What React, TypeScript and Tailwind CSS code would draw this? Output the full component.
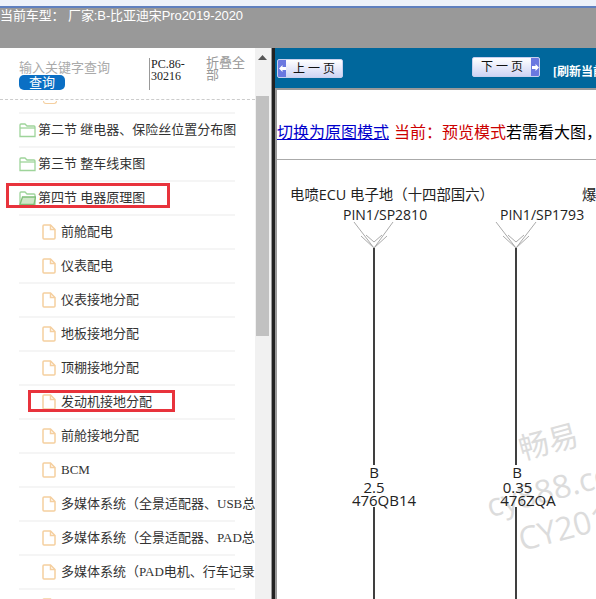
const serif = "font-['Liberation_Serif','Noto_Sans_CJK_SC',serif]";

const rows = [
  { label: "第二节 继电器、保险丝位置分布图", folder: true },
  { label: "第三节 整车线束图", folder: true },
  { label: "第四节 电器原理图", folder: true, open: true },
  { label: "前舱配电" },
  { label: "仪表配电" },
  { label: "仪表接地分配" },
  { label: "地板接地分配" },
  { label: "顶棚接地分配" },
  { label: "发动机接地分配" },
  { label: "前舱接地分配" },
  { label: "BCM" },
  { label: "多媒体系统（全景适配器、USB总" },
  { label: "多媒体系统（全景适配器、PAD总" },
  { label: "多媒体系统（PAD电机、行车记录" },
  { label: "" },
];

function FolderIcon({ open }: { open?: boolean }) {
  return (
    <svg width="17" height="15" viewBox="0 0 17 15" fill="none" stroke="#9ed49a" strokeWidth="1.3" className="shrink-0">
      <path d="M1 13.5V2a1 1 0 0 1 1-1h4l2 2h7a1 1 0 0 1 1 1v9.5z" />
      {open && <path d="M1 13.5 3.5 6H16.5L15 13.5z" fill="#cfe8c8" stroke="#7fbf78" />}
      {!open && <path d="M1 5h15" />}
    </svg>
  );
}

function FileIcon() {
  return (
    <svg width="14" height="16" viewBox="0 0 14 16" fill="none" stroke="#f5cf9f" strokeWidth="1.5" className="shrink-0">
      <path d="M2 1h6.5L13 5.5V14a1 1 0 0 1-1 1H2a1 1 0 0 1-1-1V2a1 1 0 0 1 1-1z" />
      <path d="M8.5 1v4.5H13" />
    </svg>
  );
}

function PageButton({ label, dir }: { label: string; dir: "prev" | "next" }) {
  const arrow = (
    <span className="flex h-full w-[8px] shrink-0 items-center justify-center bg-[#6a78e0]">
      <svg width="7" height="7" viewBox="0 0 7 7" fill="#fff">
        <path d={dir === "prev" ? "M0 3.5 3.5 0V2H7V5H3.5V7z" : "M7 3.5 3.5 0V2H0V5H3.5V7z"} />
      </svg>
    </span>
  );
  return (
    <div
      className={`flex items-center overflow-hidden rounded-[2px] border border-[#c8d0ee] bg-gradient-to-b from-[#ffffff] to-[#cfd4f4] text-[12px] text-[#111] ${
        dir === "prev" ? "h-[19px] w-[66px]" : "h-[20px] w-[68px]"
      }`}
    >
      {dir === "prev" && arrow}
      <span className="flex-1 whitespace-pre text-center">{label}</span>
      {dir === "next" && arrow}
    </div>
  );
}

function Diagram() {
  const font = "'Open Sans','Noto Sans CJK SC',sans-serif";
  return (
    <svg width="319" height="439" viewBox="277 160 319 439" className="block" fontFamily={font} fill="#222">
      <g fill="#dcdcdc" transform="rotate(-15 560 450)">
        <text x="521" y="450" fontSize="30">畅易</text>
        <text x="475" y="497" fontSize="32">cy888.com</text>
        <text x="497" y="538" fontSize="32">CY2018</text>
      </g>

      <text x="290" y="200" fontSize="14.4">电喷ECU 电子地（十四部国六）</text>
      <text x="582" y="200" fontSize="14.4">爆</text>
      <text x="343" y="220" fontSize="14">PIN1/SP2810</text>
      <text x="500" y="220" fontSize="14">PIN1/SP1793</text>

      <g fill="none" stroke="#aaa" strokeWidth="1">
        <path d="M354 222 374 248 393 222M361 236 374 248 387 236M366 235 374 242 382 235" />
        <path d="M496 222 516 248 536 222M503 236 516 248 529 236M508 235 516 242 524 235" />
      </g>
      <g stroke="#111" strokeWidth="1.6">
        <path d="M374 248V465M374 507V599" />
        <path d="M516 248V465M516 507V599" />
      </g>

      <g fontSize="15" textAnchor="middle">
        <text x="374" y="478">B</text>
        <text x="374" y="493">2.5</text>
        <text x="384" y="506">476QB14</text>
        <text x="517" y="478">B</text>
        <text x="517.5" y="493">0.35</text>
        <text x="528" y="506">476ZQA</text>
      </g>
    </svg>
  );
}

export default function App() {
  return (
    <div className={`flex h-[599px] w-[596px] flex-col overflow-hidden bg-white ${serif}`}>
      {/* window edge */}
      <div className="h-[8px] shrink-0 border-b-2 border-[#5f80bf] bg-[#edf2fa]" />

      {/* current model */}
      <div className="h-[40px] shrink-0 bg-[#999999] font-['Liberation_Sans','Noto_Sans_CJK_SC',sans-serif] text-[13px] leading-[16px] tracking-[-0.1px] text-white">
        当前车型： 厂家:B-比亚迪宋Pro2019-2020
      </div>

      <div className="flex min-h-0 flex-1">
        {/* left tree */}
        <div className="relative w-[255px] shrink-0 overflow-hidden">
          <div className="flex h-[52px] border-b border-dashed border-[#ccc]">
            <div className="ml-[19px] w-[130px] pt-[13px]">
              <div className="text-[13px] leading-[14px] text-[#aaa]">输入关键字查询</div>
              <div className="h-[15px] w-[46px] rounded-[5px] bg-[#0a6fc4] text-center text-[13px] leading-[15px] text-white">
                查询
              </div>
            </div>
            <div className="mt-[10px] h-[32px] w-[57px] border-l border-[#999] pl-[1px] text-[12px] leading-[12px] text-[#222]">
              PC.86-
              <br />
              30216
            </div>
            <div className="mt-[9px] w-[39px] text-[13px] leading-[12px] text-[#999]">折叠全部</div>
          </div>

          {/* row that is scrolled away, only its icon's foot shows */}
          <div className="ml-[19px] flex h-[14px] w-[216px] items-end border-b-2 border-[#f5f5f5] pb-[8px] pl-[24px]">
            <div className="h-[3px] w-[14px] rounded-b-[4px] border-x border-b border-[#f5cf9f]" />
          </div>

          <ul className="ml-[19px] w-[216px]">
            {rows.map((r, i) => (
              <li
                key={i}
                className={`flex h-[34px] items-center whitespace-nowrap border-b-2 border-[#f5f5f5] text-[13px] text-[#333] ${
                  r.folder ? "gap-[2px]" : "gap-[5px] pl-[23px]"
                }`}
              >
                {r.folder ? <FolderIcon open={r.open} /> : <FileIcon />}
                {r.label && <span>{r.label}</span>}
              </li>
            ))}
          </ul>

          {/* annotation boxes */}
          <div className="absolute left-[6px] top-[135px] h-[25px] w-[164px] border-[3px] border-[#e8333c]" />
          <div className="absolute left-[28px] top-[342px] h-[22px] w-[147px] border-[3px] border-[#e8333c]" />
        </div>

        {/* scrollbar */}
        <div className="flex w-[16px] shrink-0 flex-col bg-[#f1f1f1]">
          <div className="flex h-[48px] justify-center pr-[1px] pt-[7px]">
            <svg width="9" height="5" viewBox="0 0 9 5" fill="#555">
              <path d="M4.5 0 9 5H0z" />
            </svg>
          </div>
          <div className="ml-[1px] h-[240px] w-[13px] bg-[#c1c1c1]" />
        </div>
        <div className="w-[1px] shrink-0 bg-[#999]" />
        <div className="w-[3px] shrink-0 bg-[#222]" />

        {/* right page */}
        <div className="flex min-w-0 flex-1 flex-col overflow-hidden">
          <div className="flex h-[42px] shrink-0 items-start whitespace-nowrap border-b-2 border-[#999] bg-[#00679c]">
            <div className="ml-[2px] mt-[11px]">
              <PageButton label="上 一 页" dir="prev" />
            </div>
            <div className="ml-[129px] mt-[9px]">
              <PageButton label="下 一 页" dir="next" />
            </div>
            <span className="ml-[13px] mt-[15px] text-[12px] font-bold text-white">[刷新当前页]</span>
          </div>
          <div className="flex min-h-0 flex-1 flex-col border-l-2 border-[#999]">
            <div className="flex h-[70px] shrink-0 items-start whitespace-nowrap border-b border-[#aaa] pt-[33px] text-[16px] leading-[20px]">
              <a className="text-[#0000cc] underline">切换为原图模式</a>
              <span className="ml-[5px] text-[#cc0000]">当前：预览模式</span>
              <span className="text-black">若需看大图，请点击切换</span>
            </div>
            <Diagram />
          </div>
        </div>
      </div>
    </div>
  );
}
